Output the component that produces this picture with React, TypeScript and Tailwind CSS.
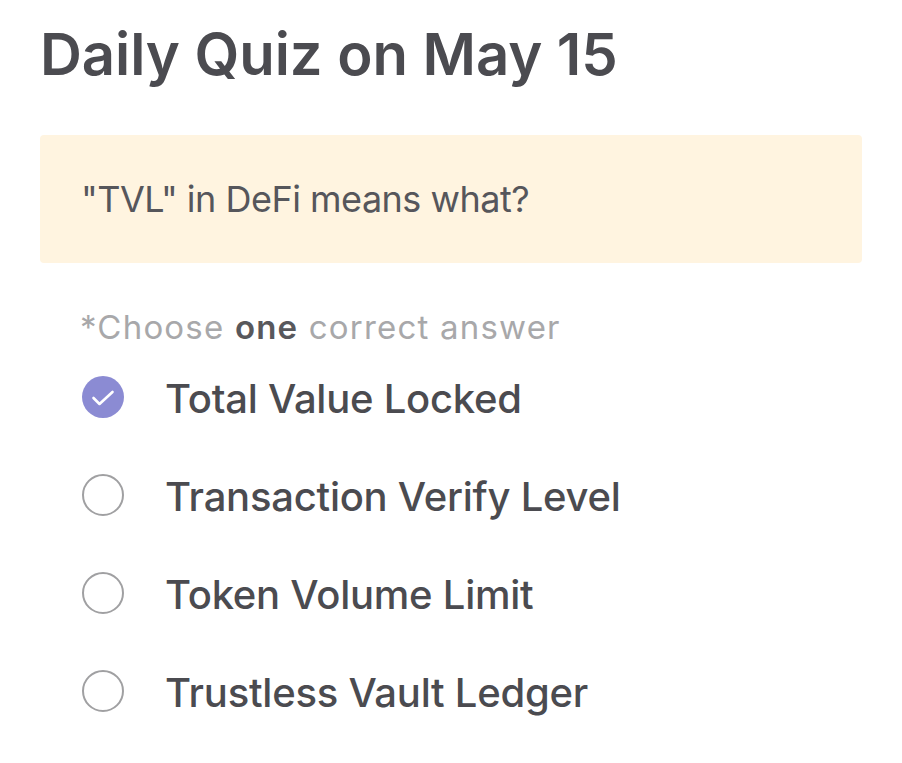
import React from "react";

const options = [
  "Total Value Locked",
  "Transaction Verify Level",
  "Token Volume Limit",
  "Trustless Vault Ledger",
];

export default function App() {
  return (
    <div className="w-[902px] h-[763px] bg-white overflow-hidden" style={{ fontFamily: "Inter, 'Noto Sans', sans-serif" }}>
      <div className="pt-[19px] pl-[40px] pr-[40px]">
        <h1 className="text-[58px] leading-[70px] font-semibold text-[#4b4b50] tracking-[-0.05px]">Daily Quiz on May 15</h1>
        <div className="mt-[46px] h-[128px] bg-[#fff4e0] rounded-[4px] flex items-center pl-[41px]">
          <span className="text-[36px] text-[#56565b] font-normal tracking-[-0.5px]">"TVL" in DeFi means what?</span>
        </div>
        <div className="mt-[44px] pl-[40px] text-[33px] leading-[40px] text-[#a8a8aa] tracking-[1.2px]">
          *Choose <span className="font-semibold text-[#58585c]">one</span> correct answer
        </div>
        <div className="mt-[1px] pl-[42px] flex flex-col">
          {options.map((o, i) => (
            <div key={o} className="h-[98px] flex items-center">
              {i === 0 ? (
                <div className="w-[42px] h-[42px] rounded-full bg-[#8b8bd3] flex items-center justify-center">
                  <svg width="24" height="24" viewBox="0 0 24 24" fill="none" stroke="white" strokeWidth="2.6" strokeLinecap="round" strokeLinejoin="round">
                    <path d="M2.5 13l6 6L21.5 7" />
                  </svg>
                </div>
              ) : (
                <div className="w-[42px] h-[42px] rounded-full border-[2px] border-[#a0a0a2]" />
              )}
              <span className="ml-[41px] mt-[3px] text-[40px] font-medium text-[#4b4b50] tracking-[-0.25px]">{o}</span>
            </div>
          ))}
        </div>
      </div>
    </div>
  );
}
